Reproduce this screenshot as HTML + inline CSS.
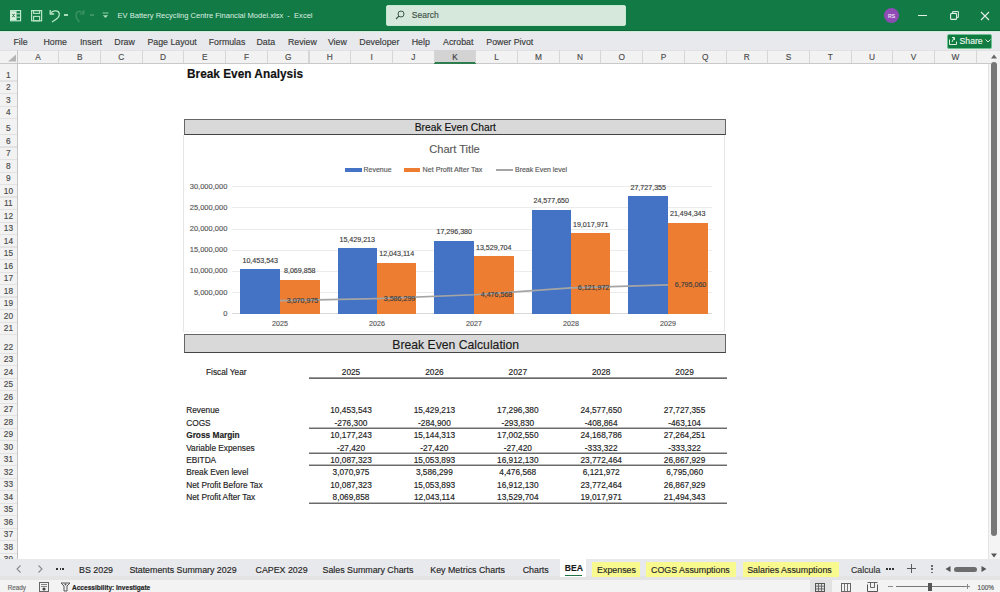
<!DOCTYPE html><html><head><meta charset="utf-8"><style>
html,body{margin:0;padding:0;width:1000px;height:592px;overflow:hidden;background:#fff;}
body{position:relative;font-family:"Liberation Sans",sans-serif;}
.t{position:absolute;height:20px;line-height:20px;white-space:nowrap;-webkit-text-stroke:0.15px currentColor;}
.r{position:absolute;}
svg{position:absolute;}
</style></head><body>
<div class="r" style="left:0px;top:0px;width:1000px;height:31px;background:#127b45;"></div>
<div class="r" style="left:0px;top:30px;width:1000px;height:1px;background:#0d6633;"></div>
<div class="r" style="left:0px;top:31px;width:1000px;height:1px;background:#cdeed8;"></div>
<svg style="left:10px;top:9.5px" width="12" height="12" viewBox="0 0 12 12">
<rect x="0.6" y="0.6" width="10" height="10.2" fill="none" stroke="#c9efd5" stroke-width="1.1"/>
<rect x="0.6" y="1.2" width="6" height="9" fill="#d5f3de"/>
<path d="M2.3 3.8 L4.7 7.2 M4.7 3.8 L2.3 7.2" stroke="#2f6b45" stroke-width="1"/>
<path d="M6.6 3.8 L10.6 3.8 M6.6 7.2 L10.6 7.2" stroke="#c9efd5" stroke-width="1"/>
</svg>
<svg style="left:31px;top:9.6px" width="12" height="12" viewBox="0 0 12 12">
<rect x="0.6" y="0.6" width="10" height="10.2" fill="none" stroke="#b8e6c6" stroke-width="1.2"/>
<rect x="2.6" y="0.6" width="6" height="2.8" fill="none" stroke="#b8e6c6" stroke-width="1.1"/>
<rect x="2.6" y="6.4" width="6" height="4.4" fill="none" stroke="#b8e6c6" stroke-width="1.1"/>
</svg>
<svg style="left:49px;top:9px" width="12" height="14" viewBox="0 0 12 14">
<path d="M1.8 4.2 C3.5 1.2 9.5 0.8 10.3 4.6 C10.9 7.6 7.5 10.5 3 13" fill="none" stroke="#b8e6c6" stroke-width="1.3"/>
<path d="M1.2 1 L1.2 5 L5.2 5" fill="none" stroke="#b8e6c6" stroke-width="1.3"/>
</svg>
<div class="r" style="left:64px;top:14px;width:4px;height:2px;background:#a9dcb9;"></div>
<svg style="left:74px;top:9px" width="11" height="14" viewBox="0 0 11 14">
<path d="M9.5 4.5 C8 1.5 3 1.5 2.2 5 C1.6 8 3.5 11 5.5 13" fill="none" stroke="#3f9463" stroke-width="1.2"/>
<path d="M9.8 1 L9.8 5 L5.8 5" fill="none" stroke="#3f9463" stroke-width="1.2"/>
</svg>
<div class="r" style="left:90px;top:14px;width:4px;height:2px;background:#3f9463;"></div>
<svg style="left:102px;top:12px" width="7" height="7" viewBox="0 0 7 7">
<line x1="0.5" y1="1" x2="6.5" y2="1" stroke="#8ccfa2"/><path d="M0.8 3.3 L3.5 6 L6.2 3.3 Z" fill="#a9dcb9"/>
</svg>
<div class="t" style="left:117.5px;top:6.0px;font-size:7.55px;color:#dcefe2;font-weight:400;-webkit-text-stroke:0;">EV Battery Recycling Centre Financial Model.xlsx&nbsp; -&nbsp; Excel</div>
<div class="r" style="left:385.5px;top:5px;width:240px;height:20.6px;background:#d6e7dc;border:1px solid #c2e9cf;box-sizing:border-box;border-radius:2px;"></div>
<svg style="left:395px;top:10px" width="10" height="10" viewBox="0 0 10 10">
<circle cx="6" cy="4" r="3" fill="none" stroke="#3a5a46" stroke-width="1"/><line x1="4" y1="6" x2="1" y2="9" stroke="#3a5a46" stroke-width="1.1"/>
</svg>
<div class="t" style="left:411.8px;top:5.199999999999999px;font-size:8.5px;color:#3c5346;font-weight:400;">Search</div>
<div class="r" style="left:883.7px;top:7.8px;width:15.6px;height:15.6px;border-radius:50%;background:#8f4bb5;"></div>
<div class="t" style="left:591.5px;width:600px;text-align:center;top:5.6px;font-size:5px;color:#f3e6fa;font-weight:400;">RS</div>
<div class="r" style="left:918px;top:15px;width:9px;height:1px;background:#e3f0e7;"></div>
<svg style="left:949.5px;top:11px" width="9" height="9" viewBox="0 0 9 9">
<rect x="0.6" y="2.4" width="6" height="6" rx="1" fill="none" stroke="#e3f0e7" stroke-width="1.1"/>
<path d="M2.6 2.2 L2.6 0.6 L8.4 0.6 L8.4 6.4 L6.8 6.4" fill="none" stroke="#e3f0e7" stroke-width="1"/>
</svg>
<svg style="left:980px;top:11px" width="10" height="10" viewBox="0 0 10 10">
<path d="M1 1 L9 9 M9 1 L1 9" stroke="#e3f0e7" stroke-width="1.1"/>
</svg>
<div class="r" style="left:0px;top:32px;width:1000px;height:18px;background:#e7e9ed;"></div>
<div class="t" style="left:13.5px;top:31.6px;font-size:8.8px;color:#3b3b3b;font-weight:400;">File</div>
<div class="t" style="left:43.5px;top:31.6px;font-size:8.8px;color:#3b3b3b;font-weight:400;">Home</div>
<div class="t" style="left:79.9px;top:31.6px;font-size:8.8px;color:#3b3b3b;font-weight:400;">Insert</div>
<div class="t" style="left:114.3px;top:31.6px;font-size:8.8px;color:#3b3b3b;font-weight:400;">Draw</div>
<div class="t" style="left:147.4px;top:31.6px;font-size:8.8px;color:#3b3b3b;font-weight:400;">Page Layout</div>
<div class="t" style="left:208.7px;top:31.6px;font-size:8.8px;color:#3b3b3b;font-weight:400;">Formulas</div>
<div class="t" style="left:256.5px;top:31.6px;font-size:8.8px;color:#3b3b3b;font-weight:400;">Data</div>
<div class="t" style="left:287.9px;top:31.6px;font-size:8.8px;color:#3b3b3b;font-weight:400;">Review</div>
<div class="t" style="left:327.9px;top:31.6px;font-size:8.8px;color:#3b3b3b;font-weight:400;">View</div>
<div class="t" style="left:359.3px;top:31.6px;font-size:8.8px;color:#3b3b3b;font-weight:400;">Developer</div>
<div class="t" style="left:411.7px;top:31.6px;font-size:8.8px;color:#3b3b3b;font-weight:400;">Help</div>
<div class="t" style="left:443.1px;top:31.6px;font-size:8.8px;color:#3b3b3b;font-weight:400;">Acrobat</div>
<div class="t" style="left:486.3px;top:31.6px;font-size:8.8px;color:#3b3b3b;font-weight:400;">Power Pivot</div>
<div class="r" style="left:946.8px;top:33.5px;width:45.5px;height:15.2px;background:#107c41;border:1px solid #6cc191;box-sizing:border-box;border-radius:2px;"></div>
<svg style="left:949px;top:36px" width="8" height="9" viewBox="0 0 8 9">
<path d="M0.5 3.5 L0.5 8.5 L7.5 8.5 L7.5 5.5" fill="none" stroke="#d8efe0" stroke-width="1"/>
<path d="M3 6 L5 2 M3 1.5 L5.5 1.5 L5.5 4" fill="none" stroke="#d8efe0" stroke-width="1"/>
</svg>
<div class="t" style="left:959.5px;top:31.299999999999997px;font-size:8.7px;color:#eaf6ee;font-weight:400;">Share</div>
<svg style="left:985px;top:39px" width="6" height="4" viewBox="0 0 6 4"><path d="M0.5 0.5 L3 3 L5.5 0.5" fill="none" stroke="#d8efe0" stroke-width="1"/></svg>
<div class="r" style="left:0px;top:50px;width:1000px;height:14px;background:#f2f2f2;"></div>
<div class="r" style="left:0px;top:50px;width:1000px;height:1px;background:#e1e1e1;"></div>
<div class="r" style="left:0px;top:63px;width:991px;height:1px;background:#c9c9c9;"></div>
<div class="r" style="left:434px;top:50px;width:42px;height:14px;background:#d3d3d3;"></div>
<div class="r" style="left:434px;top:62px;width:42px;height:2px;background:#2e7d4f;"></div>
<div class="r" style="left:58px;top:50px;width:1px;height:13px;background:#d6d6d6;"></div>
<div class="t" style="left:-262.05px;width:600px;text-align:center;top:46.8px;font-size:8.3px;color:#4a4a4a;font-weight:400;">A</div>
<div class="r" style="left:100px;top:50px;width:1px;height:13px;background:#d6d6d6;"></div>
<div class="t" style="left:-220.35px;width:600px;text-align:center;top:46.8px;font-size:8.3px;color:#4a4a4a;font-weight:400;">B</div>
<div class="r" style="left:142px;top:50px;width:1px;height:13px;background:#d6d6d6;"></div>
<div class="t" style="left:-178.65px;width:600px;text-align:center;top:46.8px;font-size:8.3px;color:#4a4a4a;font-weight:400;">C</div>
<div class="r" style="left:183px;top:50px;width:1px;height:13px;background:#d6d6d6;"></div>
<div class="t" style="left:-136.95px;width:600px;text-align:center;top:46.8px;font-size:8.3px;color:#4a4a4a;font-weight:400;">D</div>
<div class="r" style="left:225px;top:50px;width:1px;height:13px;background:#d6d6d6;"></div>
<div class="t" style="left:-95.25px;width:600px;text-align:center;top:46.8px;font-size:8.3px;color:#4a4a4a;font-weight:400;">E</div>
<div class="r" style="left:267px;top:50px;width:1px;height:13px;background:#d6d6d6;"></div>
<div class="t" style="left:-53.55000000000001px;width:600px;text-align:center;top:46.8px;font-size:8.3px;color:#4a4a4a;font-weight:400;">F</div>
<div class="r" style="left:308px;top:50px;width:2px;height:13px;background:#d6d6d6;"></div>
<div class="t" style="left:-11.849999999999966px;width:600px;text-align:center;top:46.8px;font-size:8.3px;color:#4a4a4a;font-weight:400;">G</div>
<div class="r" style="left:350px;top:50px;width:1px;height:13px;background:#d6d6d6;"></div>
<div class="t" style="left:29.85000000000008px;width:600px;text-align:center;top:46.8px;font-size:8.3px;color:#4a4a4a;font-weight:400;">H</div>
<div class="r" style="left:392px;top:50px;width:1px;height:13px;background:#d6d6d6;"></div>
<div class="t" style="left:71.55000000000007px;width:600px;text-align:center;top:46.8px;font-size:8.3px;color:#4a4a4a;font-weight:400;">I</div>
<div class="r" style="left:434px;top:50px;width:1px;height:13px;background:#d6d6d6;"></div>
<div class="t" style="left:113.25000000000006px;width:600px;text-align:center;top:46.8px;font-size:8.3px;color:#4a4a4a;font-weight:400;">J</div>
<div class="r" style="left:475px;top:50px;width:1px;height:13px;background:#d6d6d6;"></div>
<div class="t" style="left:154.95000000000005px;width:600px;text-align:center;top:46.8px;font-size:8.3px;color:#3a3a3a;font-weight:400;">K</div>
<div class="r" style="left:517px;top:50px;width:1px;height:13px;background:#d6d6d6;"></div>
<div class="t" style="left:196.6500000000001px;width:600px;text-align:center;top:46.8px;font-size:8.3px;color:#4a4a4a;font-weight:400;">L</div>
<div class="r" style="left:559px;top:50px;width:1px;height:13px;background:#d6d6d6;"></div>
<div class="t" style="left:238.35000000000002px;width:600px;text-align:center;top:46.8px;font-size:8.3px;color:#4a4a4a;font-weight:400;">M</div>
<div class="r" style="left:600px;top:50px;width:1px;height:13px;background:#d6d6d6;"></div>
<div class="t" style="left:280.05000000000007px;width:600px;text-align:center;top:46.8px;font-size:8.3px;color:#4a4a4a;font-weight:400;">N</div>
<div class="r" style="left:642px;top:50px;width:1px;height:13px;background:#d6d6d6;"></div>
<div class="t" style="left:321.7500000000001px;width:600px;text-align:center;top:46.8px;font-size:8.3px;color:#4a4a4a;font-weight:400;">O</div>
<div class="r" style="left:684px;top:50px;width:1px;height:13px;background:#d6d6d6;"></div>
<div class="t" style="left:363.45000000000005px;width:600px;text-align:center;top:46.8px;font-size:8.3px;color:#4a4a4a;font-weight:400;">P</div>
<div class="r" style="left:726px;top:50px;width:1px;height:13px;background:#d6d6d6;"></div>
<div class="t" style="left:405.1500000000001px;width:600px;text-align:center;top:46.8px;font-size:8.3px;color:#4a4a4a;font-weight:400;">Q</div>
<div class="r" style="left:767px;top:50px;width:1px;height:13px;background:#d6d6d6;"></div>
<div class="t" style="left:446.85000000000014px;width:600px;text-align:center;top:46.8px;font-size:8.3px;color:#4a4a4a;font-weight:400;">R</div>
<div class="r" style="left:809px;top:50px;width:1px;height:13px;background:#d6d6d6;"></div>
<div class="t" style="left:488.55000000000007px;width:600px;text-align:center;top:46.8px;font-size:8.3px;color:#4a4a4a;font-weight:400;">S</div>
<div class="r" style="left:851px;top:50px;width:1px;height:13px;background:#d6d6d6;"></div>
<div class="t" style="left:530.2500000000001px;width:600px;text-align:center;top:46.8px;font-size:8.3px;color:#4a4a4a;font-weight:400;">T</div>
<div class="r" style="left:892px;top:50px;width:1px;height:13px;background:#d6d6d6;"></div>
<div class="t" style="left:571.95px;width:600px;text-align:center;top:46.8px;font-size:8.3px;color:#4a4a4a;font-weight:400;">U</div>
<div class="r" style="left:934px;top:50px;width:1px;height:13px;background:#d6d6d6;"></div>
<div class="t" style="left:613.6500000000001px;width:600px;text-align:center;top:46.8px;font-size:8.3px;color:#4a4a4a;font-weight:400;">V</div>
<div class="r" style="left:976px;top:50px;width:1px;height:13px;background:#d6d6d6;"></div>
<div class="t" style="left:655.3500000000001px;width:600px;text-align:center;top:46.8px;font-size:8.3px;color:#4a4a4a;font-weight:400;">W</div>
<div class="r" style="left:1017px;top:50px;width:1px;height:13px;background:#d6d6d6;"></div>
<div class="r" style="left:17px;top:50px;width:1px;height:509px;background:#c6c6c6;"></div>
<svg style="left:7px;top:54px" width="10" height="8" viewBox="0 0 10 8"><path d="M9 0.5 L9 7.5 L1 7.5 Z" fill="#b3b3b3"/></svg>
<div class="r" style="left:0px;top:64px;width:17px;height:495px;background:#f2f2f2;"></div>
<div class="r" style="left:0px;top:80px;width:17px;height:2px;background:#e2e2e2;"></div>
<div class="t" style="left:-291.6px;width:600px;text-align:center;top:64.7px;font-size:8.3px;color:#4a4a4a;font-weight:400;">1</div>
<div class="r" style="left:0px;top:93px;width:17px;height:1px;background:#e2e2e2;"></div>
<div class="t" style="left:-291.6px;width:600px;text-align:center;top:77.2px;font-size:8.3px;color:#4a4a4a;font-weight:400;">2</div>
<div class="r" style="left:0px;top:106px;width:17px;height:1px;background:#e2e2e2;"></div>
<div class="t" style="left:-291.6px;width:600px;text-align:center;top:89.7px;font-size:8.3px;color:#4a4a4a;font-weight:400;">3</div>
<div class="r" style="left:0px;top:118px;width:17px;height:1px;background:#e2e2e2;"></div>
<div class="t" style="left:-291.6px;width:600px;text-align:center;top:102.2px;font-size:8.3px;color:#4a4a4a;font-weight:400;">4</div>
<div class="r" style="left:0px;top:134px;width:17px;height:1px;background:#e2e2e2;"></div>
<div class="t" style="left:-291.6px;width:600px;text-align:center;top:118.19999999999999px;font-size:8.3px;color:#4a4a4a;font-weight:400;">5</div>
<div class="r" style="left:0px;top:146px;width:17px;height:2px;background:#e2e2e2;"></div>
<div class="t" style="left:-291.6px;width:600px;text-align:center;top:130.7px;font-size:8.3px;color:#4a4a4a;font-weight:400;">6</div>
<div class="r" style="left:0px;top:159px;width:17px;height:1px;background:#e2e2e2;"></div>
<div class="t" style="left:-291.6px;width:600px;text-align:center;top:143.2px;font-size:8.3px;color:#4a4a4a;font-weight:400;">7</div>
<div class="r" style="left:0px;top:172px;width:17px;height:1px;background:#e2e2e2;"></div>
<div class="t" style="left:-291.6px;width:600px;text-align:center;top:155.7px;font-size:8.3px;color:#4a4a4a;font-weight:400;">8</div>
<div class="r" style="left:0px;top:184px;width:17px;height:1px;background:#e2e2e2;"></div>
<div class="t" style="left:-291.6px;width:600px;text-align:center;top:168.2px;font-size:8.3px;color:#4a4a4a;font-weight:400;">9</div>
<div class="r" style="left:0px;top:196px;width:17px;height:2px;background:#e2e2e2;"></div>
<div class="t" style="left:-291.6px;width:600px;text-align:center;top:180.7px;font-size:8.3px;color:#4a4a4a;font-weight:400;">10</div>
<div class="r" style="left:0px;top:209px;width:17px;height:1px;background:#e2e2e2;"></div>
<div class="t" style="left:-291.6px;width:600px;text-align:center;top:193.2px;font-size:8.3px;color:#4a4a4a;font-weight:400;">11</div>
<div class="r" style="left:0px;top:222px;width:17px;height:1px;background:#e2e2e2;"></div>
<div class="t" style="left:-291.6px;width:600px;text-align:center;top:205.7px;font-size:8.3px;color:#4a4a4a;font-weight:400;">12</div>
<div class="r" style="left:0px;top:234px;width:17px;height:1px;background:#e2e2e2;"></div>
<div class="t" style="left:-291.6px;width:600px;text-align:center;top:218.2px;font-size:8.3px;color:#4a4a4a;font-weight:400;">13</div>
<div class="r" style="left:0px;top:246px;width:17px;height:2px;background:#e2e2e2;"></div>
<div class="t" style="left:-291.6px;width:600px;text-align:center;top:230.7px;font-size:8.3px;color:#4a4a4a;font-weight:400;">14</div>
<div class="r" style="left:0px;top:259px;width:17px;height:1px;background:#e2e2e2;"></div>
<div class="t" style="left:-291.6px;width:600px;text-align:center;top:243.2px;font-size:8.3px;color:#4a4a4a;font-weight:400;">15</div>
<div class="r" style="left:0px;top:272px;width:17px;height:1px;background:#e2e2e2;"></div>
<div class="t" style="left:-291.6px;width:600px;text-align:center;top:255.7px;font-size:8.3px;color:#4a4a4a;font-weight:400;">16</div>
<div class="r" style="left:0px;top:284px;width:17px;height:1px;background:#e2e2e2;"></div>
<div class="t" style="left:-291.6px;width:600px;text-align:center;top:268.2px;font-size:8.3px;color:#4a4a4a;font-weight:400;">17</div>
<div class="r" style="left:0px;top:296px;width:17px;height:2px;background:#e2e2e2;"></div>
<div class="t" style="left:-291.6px;width:600px;text-align:center;top:280.7px;font-size:8.3px;color:#4a4a4a;font-weight:400;">18</div>
<div class="r" style="left:0px;top:309px;width:17px;height:1px;background:#e2e2e2;"></div>
<div class="t" style="left:-291.6px;width:600px;text-align:center;top:293.2px;font-size:8.3px;color:#4a4a4a;font-weight:400;">19</div>
<div class="r" style="left:0px;top:322px;width:17px;height:1px;background:#e2e2e2;"></div>
<div class="t" style="left:-291.6px;width:600px;text-align:center;top:305.7px;font-size:8.3px;color:#4a4a4a;font-weight:400;">20</div>
<div class="r" style="left:0px;top:334px;width:17px;height:1px;background:#e2e2e2;"></div>
<div class="t" style="left:-291.6px;width:600px;text-align:center;top:318.2px;font-size:8.3px;color:#4a4a4a;font-weight:400;">21</div>
<div class="r" style="left:0px;top:353px;width:17px;height:1px;background:#e2e2e2;"></div>
<div class="t" style="left:-291.6px;width:600px;text-align:center;top:336.9px;font-size:8.3px;color:#4a4a4a;font-weight:400;">22</div>
<div class="r" style="left:0px;top:365px;width:17px;height:1px;background:#e2e2e2;"></div>
<div class="t" style="left:-291.6px;width:600px;text-align:center;top:349.4px;font-size:8.3px;color:#4a4a4a;font-weight:400;">23</div>
<div class="r" style="left:0px;top:378px;width:17px;height:1px;background:#e2e2e2;"></div>
<div class="t" style="left:-291.6px;width:600px;text-align:center;top:361.9px;font-size:8.3px;color:#4a4a4a;font-weight:400;">24</div>
<div class="r" style="left:0px;top:390px;width:17px;height:1px;background:#e2e2e2;"></div>
<div class="t" style="left:-291.6px;width:600px;text-align:center;top:374.4px;font-size:8.3px;color:#4a4a4a;font-weight:400;">25</div>
<div class="r" style="left:0px;top:403px;width:17px;height:1px;background:#e2e2e2;"></div>
<div class="t" style="left:-291.6px;width:600px;text-align:center;top:386.9px;font-size:8.3px;color:#4a4a4a;font-weight:400;">26</div>
<div class="r" style="left:0px;top:415px;width:17px;height:1px;background:#e2e2e2;"></div>
<div class="t" style="left:-291.6px;width:600px;text-align:center;top:399.4px;font-size:8.3px;color:#4a4a4a;font-weight:400;">27</div>
<div class="r" style="left:0px;top:428px;width:17px;height:1px;background:#e2e2e2;"></div>
<div class="t" style="left:-291.6px;width:600px;text-align:center;top:411.9px;font-size:8.3px;color:#4a4a4a;font-weight:400;">28</div>
<div class="r" style="left:0px;top:440px;width:17px;height:1px;background:#e2e2e2;"></div>
<div class="t" style="left:-291.6px;width:600px;text-align:center;top:424.4px;font-size:8.3px;color:#4a4a4a;font-weight:400;">29</div>
<div class="r" style="left:0px;top:453px;width:17px;height:1px;background:#e2e2e2;"></div>
<div class="t" style="left:-291.6px;width:600px;text-align:center;top:436.9px;font-size:8.3px;color:#4a4a4a;font-weight:400;">30</div>
<div class="r" style="left:0px;top:465px;width:17px;height:1px;background:#e2e2e2;"></div>
<div class="t" style="left:-291.6px;width:600px;text-align:center;top:449.4px;font-size:8.3px;color:#4a4a4a;font-weight:400;">31</div>
<div class="r" style="left:0px;top:478px;width:17px;height:1px;background:#e2e2e2;"></div>
<div class="t" style="left:-291.6px;width:600px;text-align:center;top:461.9px;font-size:8.3px;color:#4a4a4a;font-weight:400;">32</div>
<div class="r" style="left:0px;top:490px;width:17px;height:1px;background:#e2e2e2;"></div>
<div class="t" style="left:-291.6px;width:600px;text-align:center;top:474.4px;font-size:8.3px;color:#4a4a4a;font-weight:400;">33</div>
<div class="r" style="left:0px;top:503px;width:17px;height:1px;background:#e2e2e2;"></div>
<div class="t" style="left:-291.6px;width:600px;text-align:center;top:486.9px;font-size:8.3px;color:#4a4a4a;font-weight:400;">34</div>
<div class="r" style="left:0px;top:515px;width:17px;height:1px;background:#e2e2e2;"></div>
<div class="t" style="left:-291.6px;width:600px;text-align:center;top:499.40000000000003px;font-size:8.3px;color:#4a4a4a;font-weight:400;">35</div>
<div class="r" style="left:0px;top:528px;width:17px;height:1px;background:#e2e2e2;"></div>
<div class="t" style="left:-291.6px;width:600px;text-align:center;top:511.9000000000001px;font-size:8.3px;color:#4a4a4a;font-weight:400;">36</div>
<div class="r" style="left:0px;top:540px;width:17px;height:1px;background:#e2e2e2;"></div>
<div class="t" style="left:-291.6px;width:600px;text-align:center;top:524.4000000000001px;font-size:8.3px;color:#4a4a4a;font-weight:400;">37</div>
<div class="r" style="left:0px;top:553px;width:17px;height:1px;background:#e2e2e2;"></div>
<div class="t" style="left:-291.6px;width:600px;text-align:center;top:536.9000000000001px;font-size:8.3px;color:#4a4a4a;font-weight:400;">38</div>
<div class="t" style="left:-291.6px;width:600px;text-align:center;top:549.4000000000001px;font-size:8.3px;color:#4a4a4a;font-weight:400;">39</div>
<div class="r" style="left:988px;top:64px;width:12px;height:495px;background:#f4f4f4;"></div>
<div class="r" style="left:988px;top:64px;width:1px;height:495px;background:#e4e4e4;"></div>
<div class="r" style="left:991px;top:62px;width:6px;height:474px;background:#777777;border-radius:3px;"></div>
<svg style="left:991px;top:54px" width="6" height="5" viewBox="0 0 6 5"><path d="M0 4.5 L3 0.5 L6 4.5 Z" fill="#666"/></svg>
<svg style="left:991px;top:552.5px" width="6" height="5" viewBox="0 0 6 5"><path d="M0 0.5 L3 4.5 L6 0.5 Z" fill="#555"/></svg>
<div class="t" style="left:187px;top:63.599999999999994px;font-size:11.85px;color:#111;font-weight:700;">Break Even Analysis</div>
<div class="r" style="left:183.6px;top:118.6px;width:542.9px;height:16px;background:#d9d9d9;border:1.2px solid #666;border-bottom-color:#444;box-sizing:border-box;"></div>
<div class="t" style="left:155.3px;width:600px;text-align:center;top:118.30000000000001px;font-size:10.3px;color:#111;font-weight:400;">Break Even Chart</div>
<div class="r" style="left:183.3px;top:134.5px;width:542px;height:197px;border:1px solid #e6e6e6;border-top:none;border-bottom-color:#f4f4f4;box-sizing:border-box;background:#fff;"></div>
<div class="t" style="left:154.5px;width:600px;text-align:center;top:139.0px;font-size:11.1px;color:#595959;font-weight:400;">Chart Title</div>
<div class="r" style="left:345px;top:168px;width:17px;height:4px;background:#4472c4;"></div>
<div class="t" style="left:363.5px;top:159.9px;font-size:7.0px;color:#595959;font-weight:400;">Revenue</div>
<div class="r" style="left:404px;top:168px;width:16px;height:4px;background:#ed7d31;"></div>
<div class="t" style="left:422.5px;top:159.9px;font-size:7.2px;color:#595959;font-weight:400;">Net Profit After Tax</div>
<div class="r" style="left:496px;top:169px;width:17px;height:2px;background:#a5a5a5;"></div>
<div class="t" style="left:515px;top:159.9px;font-size:6.95px;color:#595959;font-weight:400;">Break Even level</div>
<div class="t" style="left:-372.7px;width:600px;text-align:right;top:303.7px;font-size:7.5px;color:#595959;font-weight:400;">0</div>
<div class="r" style="left:232px;top:292px;width:480px;height:1px;background:#ececec;"></div>
<div class="t" style="left:-372.7px;width:600px;text-align:right;top:282.55px;font-size:7.5px;color:#595959;font-weight:400;">5,000,000</div>
<div class="r" style="left:232px;top:271px;width:480px;height:1px;background:#ececec;"></div>
<div class="t" style="left:-372.7px;width:600px;text-align:right;top:261.4px;font-size:7.5px;color:#595959;font-weight:400;">10,000,000</div>
<div class="r" style="left:232px;top:250px;width:480px;height:1px;background:#ececec;"></div>
<div class="t" style="left:-372.7px;width:600px;text-align:right;top:240.25px;font-size:7.5px;color:#595959;font-weight:400;">15,000,000</div>
<div class="r" style="left:232px;top:229px;width:480px;height:1px;background:#ececec;"></div>
<div class="t" style="left:-372.7px;width:600px;text-align:right;top:219.1px;font-size:7.5px;color:#595959;font-weight:400;">20,000,000</div>
<div class="r" style="left:232px;top:207px;width:480px;height:1px;background:#ececec;"></div>
<div class="t" style="left:-372.7px;width:600px;text-align:right;top:197.95px;font-size:7.5px;color:#595959;font-weight:400;">25,000,000</div>
<div class="r" style="left:232px;top:186px;width:480px;height:1px;background:#ececec;"></div>
<div class="t" style="left:-372.7px;width:600px;text-align:right;top:176.8px;font-size:7.5px;color:#595959;font-weight:400;">30,000,000</div>
<div class="r" style="left:232px;top:313px;width:480px;height:1px;background:#d9d9d9;"></div>
<div class="r" style="left:240px;top:269px;width:40px;height:45px;background:#4472c4;"></div>
<div class="r" style="left:280px;top:280px;width:40px;height:34px;background:#ed7d31;"></div>
<div class="t" style="left:-39.75px;width:600px;text-align:center;top:251.18151310999997px;font-size:7.1px;color:#404040;font-weight:400;">10,453,543</div>
<div class="t" style="left:-0.25px;width:600px;text-align:center;top:261.26450066px;font-size:7.1px;color:#404040;font-weight:400;">8,069,858</div>
<div class="t" style="left:-20px;width:600px;text-align:center;top:314.3px;font-size:7.1px;color:#595959;font-weight:400;">2025</div>
<div class="r" style="left:338px;top:248px;width:39px;height:66px;background:#4472c4;"></div>
<div class="r" style="left:377px;top:263px;width:39px;height:51px;background:#ed7d31;"></div>
<div class="t" style="left:57.25px;width:600px;text-align:center;top:230.13442901px;font-size:7.1px;color:#404040;font-weight:400;">15,429,213</div>
<div class="t" style="left:96.75px;width:600px;text-align:center;top:244.45762778px;font-size:7.1px;color:#404040;font-weight:400;">12,043,114</div>
<div class="t" style="left:77px;width:600px;text-align:center;top:314.3px;font-size:7.1px;color:#595959;font-weight:400;">2026</div>
<div class="r" style="left:434px;top:241px;width:40px;height:73px;background:#4472c4;"></div>
<div class="r" style="left:474px;top:256px;width:40px;height:58px;background:#ed7d31;"></div>
<div class="t" style="left:154.25px;width:600px;text-align:center;top:222.23631259999996px;font-size:7.1px;color:#404040;font-weight:400;">17,296,380</div>
<div class="t" style="left:193.75px;width:600px;text-align:center;top:238.16935208px;font-size:7.1px;color:#404040;font-weight:400;">13,529,704</div>
<div class="t" style="left:174px;width:600px;text-align:center;top:314.3px;font-size:7.1px;color:#595959;font-weight:400;">2027</div>
<div class="r" style="left:532px;top:210px;width:39px;height:104px;background:#4472c4;"></div>
<div class="r" style="left:571px;top:233px;width:39px;height:81px;background:#ed7d31;"></div>
<div class="t" style="left:251.25px;width:600px;text-align:center;top:191.43654049999998px;font-size:7.1px;color:#404040;font-weight:400;">24,577,650</div>
<div class="t" style="left:290.75px;width:600px;text-align:center;top:214.95398267px;font-size:7.1px;color:#404040;font-weight:400;">19,017,971</div>
<div class="t" style="left:271px;width:600px;text-align:center;top:314.3px;font-size:7.1px;color:#595959;font-weight:400;">2028</div>
<div class="r" style="left:628px;top:196px;width:40px;height:118px;background:#4472c4;"></div>
<div class="r" style="left:668px;top:223px;width:40px;height:91px;background:#ed7d31;"></div>
<div class="t" style="left:348.25px;width:600px;text-align:center;top:178.11328835px;font-size:7.1px;color:#404040;font-weight:400;">27,727,355</div>
<div class="t" style="left:387.75px;width:600px;text-align:center;top:204.47892911px;font-size:7.1px;color:#404040;font-weight:400;">21,494,343</div>
<div class="t" style="left:368px;width:600px;text-align:center;top:314.3px;font-size:7.1px;color:#595959;font-weight:400;">2029</div>
<svg style="left:0;top:0" width="1000" height="592" viewBox="0 0 1000 592"><polyline points="280,300.71 377,298.53 474,294.76 571,287.80 668,284.96" fill="none" stroke="#a5a5a5" stroke-width="1.7" stroke-linejoin="round"/></svg>
<div class="t" style="left:2.5px;width:600px;text-align:center;top:290.70977575px;font-size:7.1px;color:#404040;font-weight:400;">3,070,975</div>
<div class="t" style="left:99.5px;width:600px;text-align:center;top:288.52995523px;font-size:7.1px;color:#404040;font-weight:400;">3,586,299</div>
<div class="t" style="left:196.5px;width:600px;text-align:center;top:284.76411736px;font-size:7.1px;color:#404040;font-weight:400;">4,476,568</div>
<div class="t" style="left:293.5px;width:600px;text-align:center;top:277.80405844px;font-size:7.1px;color:#404040;font-weight:400;">6,121,972</div>
<div class="t" style="left:390.5px;width:600px;text-align:center;top:274.95689619999996px;font-size:7.1px;color:#404040;font-weight:400;">6,795,060</div>
<div class="r" style="left:183.6px;top:334.2px;width:542.9px;height:19px;background:#d9d9d9;border:1.2px solid #666;border-bottom-color:#444;box-sizing:border-box;"></div>
<div class="t" style="left:155.7px;width:600px;text-align:center;top:334.5px;font-size:12.2px;color:#1a1a1a;font-weight:400;">Break Even Calculation</div>
<div class="t" style="left:206px;top:362.4px;font-size:8.3px;color:#222;font-weight:400;">Fiscal Year</div>
<div class="t" style="left:51.0px;width:600px;text-align:center;top:362.4px;font-size:8.3px;color:#222;font-weight:400;">2025</div>
<div class="t" style="left:134.39999999999998px;width:600px;text-align:center;top:362.4px;font-size:8.3px;color:#222;font-weight:400;">2026</div>
<div class="t" style="left:217.79999999999995px;width:600px;text-align:center;top:362.4px;font-size:8.3px;color:#222;font-weight:400;">2027</div>
<div class="t" style="left:301.20000000000005px;width:600px;text-align:center;top:362.4px;font-size:8.3px;color:#222;font-weight:400;">2028</div>
<div class="t" style="left:384.6px;width:600px;text-align:center;top:362.4px;font-size:8.3px;color:#222;font-weight:400;">2029</div>
<div class="r" style="left:309px;top:377px;width:418px;height:1px;background:#9a9a9a;"></div>
<div class="r" style="left:309px;top:378px;width:418px;height:1px;background:#6a6a6a;"></div>
<div class="t" style="left:186.2px;top:400.3px;font-size:8.3px;color:#222;font-weight:400;">Revenue</div>
<div class="t" style="left:51.0px;width:600px;text-align:center;top:400.3px;font-size:8.3px;color:#222;font-weight:400;">10,453,543</div>
<div class="t" style="left:134.39999999999998px;width:600px;text-align:center;top:400.3px;font-size:8.3px;color:#222;font-weight:400;">15,429,213</div>
<div class="t" style="left:217.79999999999995px;width:600px;text-align:center;top:400.3px;font-size:8.3px;color:#222;font-weight:400;">17,296,380</div>
<div class="t" style="left:301.20000000000005px;width:600px;text-align:center;top:400.3px;font-size:8.3px;color:#222;font-weight:400;">24,577,650</div>
<div class="t" style="left:384.6px;width:600px;text-align:center;top:400.3px;font-size:8.3px;color:#222;font-weight:400;">27,727,355</div>
<div class="t" style="left:186.2px;top:412.5px;font-size:8.3px;color:#222;font-weight:400;">COGS</div>
<div class="t" style="left:51.0px;width:600px;text-align:center;top:412.5px;font-size:8.3px;color:#222;font-weight:400;">-276,300</div>
<div class="t" style="left:134.39999999999998px;width:600px;text-align:center;top:412.5px;font-size:8.3px;color:#222;font-weight:400;">-284,900</div>
<div class="t" style="left:217.79999999999995px;width:600px;text-align:center;top:412.5px;font-size:8.3px;color:#222;font-weight:400;">-293,830</div>
<div class="t" style="left:301.20000000000005px;width:600px;text-align:center;top:412.5px;font-size:8.3px;color:#222;font-weight:400;">-408,864</div>
<div class="t" style="left:384.6px;width:600px;text-align:center;top:412.5px;font-size:8.3px;color:#222;font-weight:400;">-463,104</div>
<div class="t" style="left:186.2px;top:425.0px;font-size:8.3px;color:#222;font-weight:700;">Gross Margin</div>
<div class="t" style="left:51.0px;width:600px;text-align:center;top:425.0px;font-size:8.3px;color:#222;font-weight:400;">10,177,243</div>
<div class="t" style="left:134.39999999999998px;width:600px;text-align:center;top:425.0px;font-size:8.3px;color:#222;font-weight:400;">15,144,313</div>
<div class="t" style="left:217.79999999999995px;width:600px;text-align:center;top:425.0px;font-size:8.3px;color:#222;font-weight:400;">17,002,550</div>
<div class="t" style="left:301.20000000000005px;width:600px;text-align:center;top:425.0px;font-size:8.3px;color:#222;font-weight:400;">24,168,786</div>
<div class="t" style="left:384.6px;width:600px;text-align:center;top:425.0px;font-size:8.3px;color:#222;font-weight:400;">27,264,251</div>
<div class="t" style="left:186.2px;top:437.5px;font-size:8.3px;color:#222;font-weight:400;">Variable Expenses</div>
<div class="t" style="left:51.0px;width:600px;text-align:center;top:437.5px;font-size:8.3px;color:#222;font-weight:400;">-27,420</div>
<div class="t" style="left:134.39999999999998px;width:600px;text-align:center;top:437.5px;font-size:8.3px;color:#222;font-weight:400;">-27,420</div>
<div class="t" style="left:217.79999999999995px;width:600px;text-align:center;top:437.5px;font-size:8.3px;color:#222;font-weight:400;">-27,420</div>
<div class="t" style="left:301.20000000000005px;width:600px;text-align:center;top:437.5px;font-size:8.3px;color:#222;font-weight:400;">-333,322</div>
<div class="t" style="left:384.6px;width:600px;text-align:center;top:437.5px;font-size:8.3px;color:#222;font-weight:400;">-333,322</div>
<div class="t" style="left:186.2px;top:449.8px;font-size:8.3px;color:#222;font-weight:400;">EBITDA</div>
<div class="t" style="left:51.0px;width:600px;text-align:center;top:449.8px;font-size:8.3px;color:#222;font-weight:400;">10,087,323</div>
<div class="t" style="left:134.39999999999998px;width:600px;text-align:center;top:449.8px;font-size:8.3px;color:#222;font-weight:400;">15,053,893</div>
<div class="t" style="left:217.79999999999995px;width:600px;text-align:center;top:449.8px;font-size:8.3px;color:#222;font-weight:400;">16,912,130</div>
<div class="t" style="left:301.20000000000005px;width:600px;text-align:center;top:449.8px;font-size:8.3px;color:#222;font-weight:400;">23,772,464</div>
<div class="t" style="left:384.6px;width:600px;text-align:center;top:449.8px;font-size:8.3px;color:#222;font-weight:400;">26,867,929</div>
<div class="t" style="left:186.2px;top:462.3px;font-size:8.3px;color:#222;font-weight:400;">Break Even level</div>
<div class="t" style="left:51.0px;width:600px;text-align:center;top:462.3px;font-size:8.3px;color:#222;font-weight:400;">3,070,975</div>
<div class="t" style="left:134.39999999999998px;width:600px;text-align:center;top:462.3px;font-size:8.3px;color:#222;font-weight:400;">3,586,299</div>
<div class="t" style="left:217.79999999999995px;width:600px;text-align:center;top:462.3px;font-size:8.3px;color:#222;font-weight:400;">4,476,568</div>
<div class="t" style="left:301.20000000000005px;width:600px;text-align:center;top:462.3px;font-size:8.3px;color:#222;font-weight:400;">6,121,972</div>
<div class="t" style="left:384.6px;width:600px;text-align:center;top:462.3px;font-size:8.3px;color:#222;font-weight:400;">6,795,060</div>
<div class="t" style="left:186.2px;top:474.8px;font-size:8.3px;color:#222;font-weight:400;">Net Profit Before Tax</div>
<div class="t" style="left:51.0px;width:600px;text-align:center;top:474.8px;font-size:8.3px;color:#222;font-weight:400;">10,087,323</div>
<div class="t" style="left:134.39999999999998px;width:600px;text-align:center;top:474.8px;font-size:8.3px;color:#222;font-weight:400;">15,053,893</div>
<div class="t" style="left:217.79999999999995px;width:600px;text-align:center;top:474.8px;font-size:8.3px;color:#222;font-weight:400;">16,912,130</div>
<div class="t" style="left:301.20000000000005px;width:600px;text-align:center;top:474.8px;font-size:8.3px;color:#222;font-weight:400;">23,772,464</div>
<div class="t" style="left:384.6px;width:600px;text-align:center;top:474.8px;font-size:8.3px;color:#222;font-weight:400;">26,867,929</div>
<div class="t" style="left:186.2px;top:487.4px;font-size:8.3px;color:#222;font-weight:400;">Net Profit After Tax</div>
<div class="t" style="left:51.0px;width:600px;text-align:center;top:487.4px;font-size:8.3px;color:#222;font-weight:400;">8,069,858</div>
<div class="t" style="left:134.39999999999998px;width:600px;text-align:center;top:487.4px;font-size:8.3px;color:#222;font-weight:400;">12,043,114</div>
<div class="t" style="left:217.79999999999995px;width:600px;text-align:center;top:487.4px;font-size:8.3px;color:#222;font-weight:400;">13,529,704</div>
<div class="t" style="left:301.20000000000005px;width:600px;text-align:center;top:487.4px;font-size:8.3px;color:#222;font-weight:400;">19,017,971</div>
<div class="t" style="left:384.6px;width:600px;text-align:center;top:487.4px;font-size:8.3px;color:#222;font-weight:400;">21,494,343</div>
<div class="r" style="left:309px;top:427px;width:418px;height:1px;background:#b8b8b8;"></div>
<div class="r" style="left:309px;top:428px;width:418px;height:1px;background:#6a6a6a;"></div>
<div class="r" style="left:309px;top:452px;width:418px;height:1px;background:#b8b8b8;"></div>
<div class="r" style="left:309px;top:453px;width:418px;height:1px;background:#6a6a6a;"></div>
<div class="r" style="left:309px;top:464px;width:418px;height:1px;background:#b8b8b8;"></div>
<div class="r" style="left:309px;top:465px;width:418px;height:1px;background:#6a6a6a;"></div>
<div class="r" style="left:309px;top:502px;width:418px;height:1px;background:#b8b8b8;"></div>
<div class="r" style="left:309px;top:503px;width:418px;height:1px;background:#6a6a6a;"></div>
<div class="r" style="left:0px;top:559px;width:1000px;height:17px;background:#e8e9ec;"></div>
<div class="r" style="left:0px;top:576px;width:1000px;height:4px;background:#e4e4e4;"></div>
<svg style="left:16px;top:565px" width="6" height="8" viewBox="0 0 6 8"><path d="M4.5 0.5 L1 4 L4.5 7.5" fill="none" stroke="#8a8a8a" stroke-width="1.1"/></svg>
<svg style="left:37px;top:565px" width="6" height="8" viewBox="0 0 6 8"><path d="M1.5 0.5 L5 4 L1.5 7.5" fill="none" stroke="#8a8a8a" stroke-width="1.1"/></svg>
<div class="r" style="left:56px;top:568px;width:2px;height:2px;background:#333;"></div>
<div class="r" style="left:60px;top:568px;width:1px;height:2px;background:#333;"></div>
<div class="r" style="left:62px;top:568px;width:2px;height:2px;background:#333;"></div>
<div class="t" style="left:79.10000000000001px;top:559.6px;font-size:8.85px;color:#262626;font-weight:400;">BS 2029</div>
<div class="t" style="left:129.39999999999998px;top:559.6px;font-size:8.85px;color:#262626;font-weight:400;">Statements Summary 2029</div>
<div class="t" style="left:255.5px;top:559.6px;font-size:8.85px;color:#262626;font-weight:400;">CAPEX 2029</div>
<div class="t" style="left:322.5px;top:559.6px;font-size:8.85px;color:#262626;font-weight:400;">Sales Summary Charts</div>
<div class="t" style="left:430.3px;top:559.6px;font-size:8.85px;color:#262626;font-weight:400;">Key Metrics Charts</div>
<div class="t" style="left:522.7px;top:559.6px;font-size:8.85px;color:#262626;font-weight:400;">Charts</div>
<div class="r" style="left:560px;top:558px;width:26px;height:19px;background:#ffffff;"></div>
<div class="t" style="left:564.8px;top:558.4px;font-size:8.6px;color:#1a1a1a;font-weight:700;">BEA</div>
<div class="r" style="left:565px;top:575px;width:17px;height:1px;background:#217346;"></div>
<div class="r" style="left:592px;top:562px;width:48px;height:15px;background:#f8f98e;"></div>
<div class="t" style="left:597.1px;top:559.6px;font-size:8.85px;color:#262626;font-weight:400;">Expenses</div>
<div class="r" style="left:646px;top:562px;width:90px;height:15px;background:#f8f98e;"></div>
<div class="t" style="left:651.1px;top:559.6px;font-size:8.85px;color:#262626;font-weight:400;">COGS Assumptions</div>
<div class="r" style="left:743px;top:562px;width:96px;height:15px;background:#f8f98e;"></div>
<div class="t" style="left:747.2px;top:559.6px;font-size:8.85px;color:#262626;font-weight:400;">Salaries Assumptions</div>
<div class="t" style="left:850.9px;top:559.6px;font-size:8.85px;color:#333;font-weight:400;">Calcula</div>
<div class="r" style="left:882px;top:561px;width:1px;height:16px;background:#e8eaed;"></div>
<div class="r" style="left:886px;top:568px;width:2px;height:2px;background:#333;"></div>
<div class="r" style="left:889px;top:568px;width:2px;height:2px;background:#333;"></div>
<div class="r" style="left:892px;top:568px;width:2px;height:2px;background:#333;"></div>
<div class="r" style="left:907px;top:568px;width:9px;height:1px;background:#5a5a5a;"></div>
<div class="r" style="left:911px;top:564px;width:1px;height:9px;background:#5a5a5a;"></div>
<div class="r" style="left:931px;top:565px;width:2px;height:2px;background:#6a6a6a;"></div>
<div class="r" style="left:931px;top:568px;width:2px;height:2px;background:#6a6a6a;"></div>
<div class="r" style="left:931px;top:572px;width:2px;height:1px;background:#6a6a6a;"></div>
<svg style="left:945px;top:566px" width="6" height="6" viewBox="0 0 6 6"><path d="M5.5 0 L0.5 3 L5.5 6 Z" fill="#555"/></svg>
<div class="r" style="left:954px;top:567px;width:23px;height:5px;background:#6d6d6d;border-radius:3px;"></div>
<svg style="left:980.5px;top:566px" width="6" height="6" viewBox="0 0 6 6"><path d="M0.5 0 L5.5 3 L0.5 6 Z" fill="#555"/></svg>
<div class="r" style="left:0px;top:580px;width:1000px;height:12px;background:#f3f3f3;"></div>
<div class="t" style="left:7.8px;top:578.0px;font-size:6.3px;color:#666;font-weight:400;">Ready</div>
<svg style="left:39px;top:582px" width="10" height="10" viewBox="0 0 10 10">
<rect x="0.5" y="0.5" width="9" height="9" fill="none" stroke="#666" stroke-width="1"/>
<path d="M2 2.5 L8 2.5 M2 4.5 L8 4.5" stroke="#666" stroke-width="0.8"/><circle cx="5" cy="7" r="1.6" fill="#444"/>
</svg>
<svg style="left:60px;top:581.5px" width="11" height="10" viewBox="0 0 11 10">
<path d="M1 1 L10 1 L7 4 L7 9 L4 9 L4 4 Z" fill="none" stroke="#555" stroke-width="1"/><circle cx="5.5" cy="2.5" r="1" fill="#555"/>
</svg>
<div class="t" style="left:72px;top:578.0px;font-size:6.55px;color:#222;font-weight:700;">Accessibility: Investigate</div>
<div class="r" style="left:810px;top:580px;width:22px;height:12px;background:#e2e2e2;"></div>
<svg style="left:815px;top:582.5px" width="10" height="9" viewBox="0 0 10 9">
<rect x="0.5" y="0.5" width="9" height="8" fill="none" stroke="#555" stroke-width="1"/>
<path d="M0.5 3.2 L9.5 3.2 M0.5 5.9 L9.5 5.9 M3.5 0.5 L3.5 8.5 M6.5 0.5 L6.5 8.5" stroke="#555" stroke-width="0.8"/>
</svg>
<svg style="left:841px;top:582.5px" width="10" height="9" viewBox="0 0 10 9">
<rect x="0.5" y="0.5" width="9" height="8" fill="none" stroke="#666" stroke-width="1"/>
<path d="M3.5 0.5 L3.5 8.5 M6.5 0.5 L6.5 8.5" stroke="#666" stroke-width="0.9"/>
</svg>
<svg style="left:867px;top:582px" width="11" height="10" viewBox="0 0 11 10">
<path d="M0.5 2.5 L0.5 9.5 L10.5 9.5 L10.5 2.5" fill="none" stroke="#555" stroke-width="1"/>
<path d="M0.5 0.5 L10.5 0.5 M3.5 0.5 L3.5 5.5 L7.5 5.5 L7.5 0.5" fill="none" stroke="#555" stroke-width="0.9"/>
</svg>
<div class="r" style="left:888px;top:586px;width:5px;height:1px;background:#888;"></div>
<div class="r" style="left:896px;top:586px;width:69px;height:1px;background:#777;"></div>
<div class="r" style="left:928px;top:583px;width:4px;height:8px;background:#555;"></div>
<div class="r" style="left:965px;top:586px;width:5px;height:1px;background:#888;"></div>
<div class="r" style="left:967px;top:584px;width:1px;height:5px;background:#888;"></div>
<div class="t" style="left:977.6px;top:578.0px;font-size:6.4px;color:#555;font-weight:400;">100%</div>
</body></html>
